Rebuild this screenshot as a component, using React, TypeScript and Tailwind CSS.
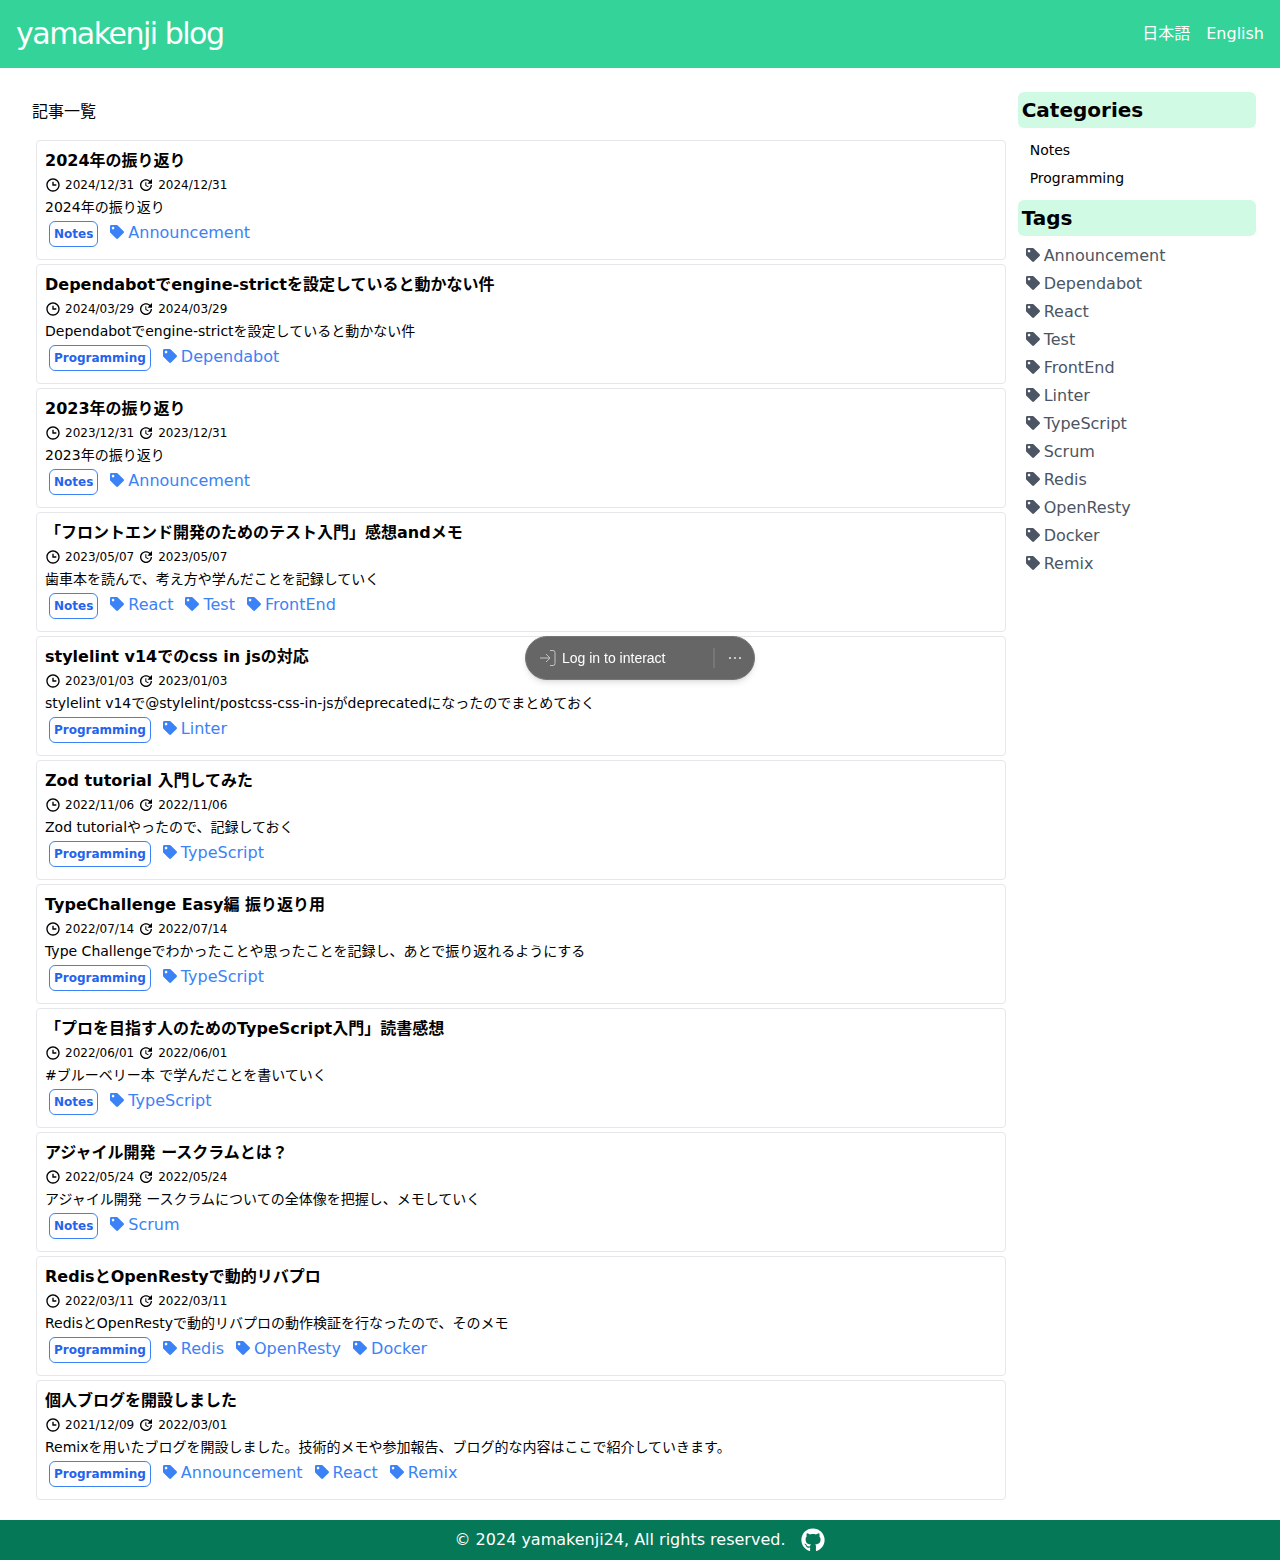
import { BiTime } from "react-icons/bi";
import { MdUpdate } from "react-icons/md";
import { FaGithub, FaTag } from "react-icons/fa";

type Post = {
  title: string;
  created: string;
  updated: string;
  description: string;
  category: string;
  tags: string[];
};

const posts: Post[] = [
  { title: "2024年の振り返り", created: "2024/12/31", updated: "2024/12/31", description: "2024年の振り返り", category: "Notes", tags: ["Announcement"] },
  { title: "Dependabotでengine-strictを設定していると動かない件", created: "2024/03/29", updated: "2024/03/29", description: "Dependabotでengine-strictを設定していると動かない件", category: "Programming", tags: ["Dependabot"] },
  { title: "2023年の振り返り", created: "2023/12/31", updated: "2023/12/31", description: "2023年の振り返り", category: "Notes", tags: ["Announcement"] },
  { title: "「フロントエンド開発のためのテスト入門」感想andメモ", created: "2023/05/07", updated: "2023/05/07", description: "歯車本を読んで、考え方や学んだことを記録していく", category: "Notes", tags: ["React", "Test", "FrontEnd"] },
  { title: "stylelint v14でのcss in jsの対応", created: "2023/01/03", updated: "2023/01/03", description: "stylelint v14で@stylelint/postcss-css-in-jsがdeprecatedになったのでまとめておく", category: "Programming", tags: ["Linter"] },
  { title: "Zod tutorial 入門してみた", created: "2022/11/06", updated: "2022/11/06", description: "Zod tutorialやったので、記録しておく", category: "Programming", tags: ["TypeScript"] },
  { title: "TypeChallenge Easy編 振り返り用", created: "2022/07/14", updated: "2022/07/14", description: "Type Challengeでわかったことや思ったことを記録し、あとで振り返れるようにする", category: "Programming", tags: ["TypeScript"] },
  { title: "「プロを目指す人のためのTypeScript入門」読書感想", created: "2022/06/01", updated: "2022/06/01", description: "#ブルーベリー本 で学んだことを書いていく", category: "Notes", tags: ["TypeScript"] },
  { title: "アジャイル開発 ースクラムとは？", created: "2022/05/24", updated: "2022/05/24", description: "アジャイル開発 ースクラムについての全体像を把握し、メモしていく", category: "Notes", tags: ["Scrum"] },
  { title: "RedisとOpenRestyで動的リバプロ", created: "2022/03/11", updated: "2022/03/11", description: "RedisとOpenRestyで動的リバプロの動作検証を行なったので、そのメモ", category: "Programming", tags: ["Redis", "OpenResty", "Docker"] },
  { title: "個人ブログを開設しました", created: "2021/12/09", updated: "2022/03/01", description: "Remixを用いたブログを開設しました。技術的メモや参加報告、ブログ的な内容はここで紹介していきます。", category: "Programming", tags: ["Announcement", "React", "Remix"] },
];

const categories = ["Notes", "Programming"];
const tags = ["Announcement", "Dependabot", "React", "Test", "FrontEnd", "Linter", "TypeScript", "Scrum", "Redis", "OpenResty", "Docker", "Remix"];

function TagLink({ name }: { name: string }) {
  return (
    <a href={`#tag-${name}`} className="flex items-center gap-1">
      <FaTag className="mb-0.5 size-3.5" aria-hidden="true" />
      {name}
    </a>
  );
}

function PostCard({ post }: { post: Post }) {
  return (
    <article className="rounded-sm border border-[#e5e7eb] p-2">
      <h2 className="font-bold">
        <a href="#post">{post.title}</a>
      </h2>
      <div className="flex h-6 items-center gap-1 text-xs">
        <BiTime className="size-4" aria-hidden="true" />
        <time>{post.created}</time>
        <MdUpdate className="size-4" aria-hidden="true" />
        <time>{post.updated}</time>
      </div>
      <p className="text-sm">{post.description}</p>
      <div className="m-1 flex items-start gap-3">
        <a href="#category" className="rounded-md border border-[#3b82f6] p-1 text-xs font-bold text-[#2563eb]">
          {post.category}
        </a>
        <div className="flex gap-3 text-[#3b82f6]">
          {post.tags.map((tag) => (
            <TagLink key={tag} name={tag} />
          ))}
        </div>
      </div>
    </article>
  );
}

function LoginBar() {
  return (
    <div className="fixed top-[636px] left-1/2 flex h-11 w-[230px] -translate-x-1/2 items-center rounded-full border border-[#777] bg-[#666] pr-2 pl-[14px] font-['Liberation_Sans',sans-serif] text-sm text-white shadow-md">
      <button type="button" className="flex flex-1 items-center gap-1.5 text-left">
        <svg viewBox="0 0 16 16" className="size-4" fill="none" stroke="#c4c4c4" aria-hidden="true">
          <path d="M0 8h10M6 4l4 4-4 4M10 .5h3a2 2 0 0 1 2 2v11a2 2 0 0 1-2 2h-3" />
        </svg>
        Log in to interact
      </button>
      <span className="h-5 w-0.5 bg-[#777]" />
      <button type="button" aria-label="More" className="flex h-8 w-[31px] items-center justify-center pl-2">
        <svg viewBox="0 0 12 4" className="h-1 w-3" fill="#ddd" aria-hidden="true">
          <circle cx="1" cy="2" r="1.1" />
          <circle cx="6" cy="2" r="1.1" />
          <circle cx="11" cy="2" r="1.1" />
        </svg>
      </button>
    </div>
  );
}

export default function App() {
  return (
    <div className="flex min-h-screen flex-col bg-white font-['DejaVu_Sans','Noto_Sans_CJK_JP',sans-serif] text-base text-black">
      <header className="flex items-center justify-between bg-[#34d399] p-4 text-white">
        <h1 className="text-3xl tracking-tighter">
          <a href="#home">yamakenji blog</a>
        </h1>
        <nav className="flex gap-4">
          <a href="#ja">日本語</a>
          <a href="#en">English</a>
        </nav>
      </header>
      <div className="flex flex-1 px-6 pt-6 pb-5">
        <main className="w-5/6 px-2">
          <p className="pt-2 pb-4">記事一覧</p>
          <div className="mx-1 flex flex-col gap-1">
            {posts.map((post) => (
              <PostCard key={post.title} post={post} />
            ))}
          </div>
        </main>
        <aside className="w-1/5">
          <h2 className="rounded-md bg-[#d1fae5] p-1 text-xl font-bold">Categories</h2>
          <ul className="flex flex-col gap-2 p-3 text-sm">
            {categories.map((name) => (
              <li key={name}>
                <a href={`#category-${name}`}>{name}</a>
              </li>
            ))}
          </ul>
          <h2 className="rounded-md bg-[#d1fae5] p-1 text-xl font-bold">Tags</h2>
          <ul className="flex flex-col gap-1 px-2 pt-2 text-[#4b5563]">
            {tags.map((name) => (
              <li key={name}>
                <TagLink name={name} />
              </li>
            ))}
          </ul>
        </aside>
      </div>
      <footer className="flex h-10 items-center justify-center gap-4 bg-[#047857] text-white">
        <small className="text-base">© 2024 yamakenji24, All rights reserved.</small>
        <a href="#github" aria-label="GitHub">
          <FaGithub className="size-6" />
        </a>
      </footer>
      <LoginBar />
    </div>
  );
}
